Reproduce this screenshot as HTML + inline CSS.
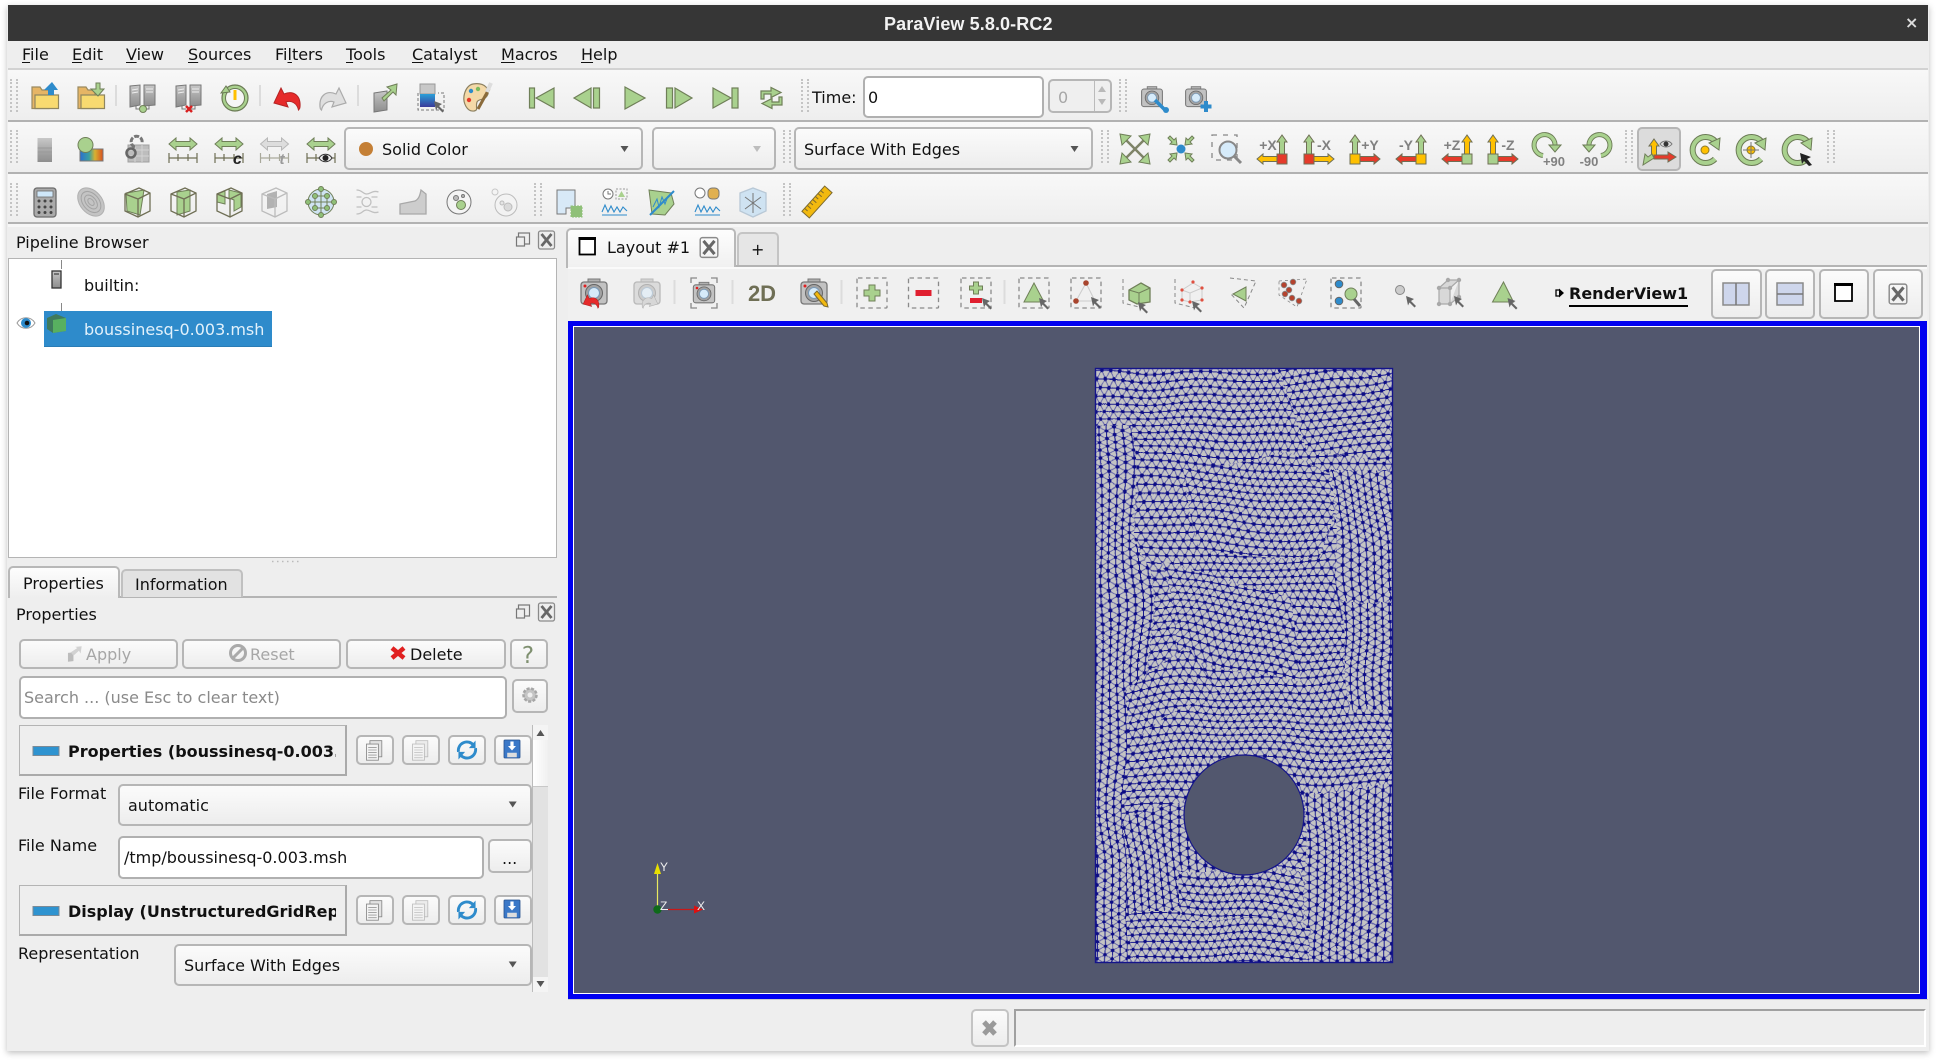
<!DOCTYPE html>
<html><head><meta charset="utf-8"><title>ParaView 5.8.0-RC2</title>
<style>
html,body{margin:0;padding:0;background:#fff;width:1936px;height:1062px;overflow:hidden}
body{position:relative;font-family:"DejaVu Sans",sans-serif;font-size:16px;color:#111}
div{position:absolute;box-sizing:border-box}
.t{position:absolute;white-space:nowrap;line-height:20px;height:20px;margin-top:1px}
.bar{left:8px;width:1920px;background:linear-gradient(#f8f8f8,#eeeeee)}
.ln{left:8px;width:1920px;height:2px;background:#b2b2b2}
.h{border-left:2px dotted #c4c4c4;border-right:2px dotted #c4c4c4;width:8px}
.b{border:2px solid #b6b6b6;border-radius:5px;background:linear-gradient(#fbfbfb,#ededed)}
.in{border:2px solid #b0b0b0;border-radius:5px;background:#fff}
.d{color:#a6a6a6}
.sec{background:#eeeeee;border:1px solid #b4b4b4;border-right:2px solid #aaa;border-bottom:2px solid #aaa}
svg{position:absolute;left:0;top:0}
u{text-underline-offset:2px}
</style></head><body>
<div style="left:7px;top:5px;width:1922px;height:1046px;background:#eeeeee;box-shadow:0 2px 6px rgba(0,0,0,.25)"></div>
<div style="left:8px;top:5px;width:1920px;height:36px;background:#363636"></div>
<div class="t" style="left:884px;top:13px;width:168px;color:#f2f2f2;font-family:'Liberation Sans',sans-serif;font-size:18px;font-weight:bold;letter-spacing:.1px">ParaView 5.8.0-RC2</div>
<div class="t" style="left:1905px;top:12px;color:#ddd;font-size:16px;font-weight:bold">×</div>

<div class="t" style="left:22px;top:44px"><u>F</u>ile</div>
<div class="t" style="left:72px;top:44px"><u>E</u>dit</div>
<div class="t" style="left:126px;top:44px"><u>V</u>iew</div>
<div class="t" style="left:188px;top:44px"><u>S</u>ources</div>
<div class="t" style="left:275px;top:44px">Fi<u>l</u>ters</div>
<div class="t" style="left:346px;top:44px"><u>T</u>ools</div>
<div class="t" style="left:412px;top:44px"><u>C</u>atalyst</div>
<div class="t" style="left:501px;top:44px"><u>M</u>acros</div>
<div class="t" style="left:581px;top:44px"><u>H</u>elp</div>

<div class="ln" style="top:68px;background:#d2d2d2"></div>
<div class="bar" style="top:70px;height:50px"></div>
<div class="ln" style="top:120px"></div>
<div class="bar" style="top:122px;height:50px"></div>
<div class="ln" style="top:172px"></div>
<div class="bar" style="top:174px;height:48px"></div>
<div class="ln" style="top:222px"></div>
<div style="left:8px;top:224px;width:1920px;height:3px;background:#f6f6f6"></div>

<div class="h" style="left:10px;top:79px;height:33px"></div>
<div class="h" style="left:801px;top:79px;height:33px"></div>
<div class="h" style="left:1119px;top:79px;height:33px"></div>
<div class="h" style="left:10px;top:130px;height:33px"></div>
<div class="h" style="left:783px;top:130px;height:33px"></div>
<div class="h" style="left:1101px;top:130px;height:33px"></div>
<div class="h" style="left:1625px;top:130px;height:33px"></div>
<div class="h" style="left:1827px;top:130px;height:33px"></div>
<div class="h" style="left:10px;top:183px;height:33px"></div>
<div class="h" style="left:534px;top:183px;height:33px"></div>
<div class="h" style="left:783px;top:183px;height:33px"></div>

<div class="t" style="left:812px;top:87px">Time:</div>
<div class="in" style="left:863px;top:76px;width:181px;height:42px"></div>
<div class="t" style="left:868px;top:87px">0</div>
<div class="b" style="left:1048px;top:79px;width:64px;height:34px;background:#efefef"></div>
<div style="left:1094px;top:81px;width:1px;height:30px;background:#bbb"></div>
<div class="t d" style="left:1058px;top:87px">0</div>

<div class="b" style="left:344px;top:127px;width:299px;height:43px"></div>
<div class="t" style="left:382px;top:139px">Solid Color</div>
<div class="b" style="left:652px;top:127px;width:124px;height:43px"></div>
<div class="b" style="left:794px;top:127px;width:299px;height:43px"></div>
<div class="t" style="left:804px;top:139px">Surface With Edges</div>
<div class="b" style="left:1637px;top:127px;width:44px;height:44px;background:#dcdcdc"></div>

<!-- pipeline -->
<div class="t" style="left:16px;top:232px">Pipeline Browser</div>
<div style="left:8px;top:258px;width:549px;height:300px;background:#fff;border:1px solid #b4b4b4"></div>
<div style="left:61px;top:260px;width:1px;height:9px;background:#888"></div>
<div style="left:61px;top:303px;width:1px;height:8px;background:#888"></div>
<div class="t" style="left:84px;top:275px">builtin:</div>
<div style="left:44px;top:311px;width:228px;height:36px;background:#2e8bcb;border-bottom:1px solid #2a7cb5"></div>
<div class="t" style="left:84px;top:319px;color:#e2f1fb">boussinesq-0.003.msh</div>

<div style="left:8px;top:596px;width:549px;height:2px;background:#b4b4b4"></div>
<div style="left:121px;top:569px;width:122px;height:28px;background:#e2e2e2;border:2px solid #c0c0c0;border-bottom:0;border-radius:5px 5px 0 0"></div>
<div style="left:8px;top:566px;width:112px;height:32px;background:linear-gradient(#fdfdfd,#eeeeee);border:2px solid #b8b8b8;border-bottom:0;border-radius:5px 5px 0 0"></div>
<div class="t" style="left:23px;top:573px">Properties</div>
<div class="t" style="left:135px;top:574px">Information</div>
<div class="t" style="left:16px;top:604px">Properties</div>

<div class="b" style="left:19px;top:639px;width:159px;height:30px"></div>
<div class="t d" style="left:86px;top:644px">Apply</div>
<div class="b" style="left:182px;top:639px;width:159px;height:30px"></div>
<div class="t d" style="left:250px;top:644px">Reset</div>
<div class="b" style="left:346px;top:639px;width:160px;height:30px"></div>
<div class="t" style="left:410px;top:644px">Delete</div>
<div class="b" style="left:510px;top:639px;width:38px;height:30px"></div>
<div class="in" style="left:19px;top:676px;width:488px;height:43px"></div>
<div class="t" style="left:24px;top:687px;color:#8a8a8a">Search ... (use Esc to clear text)</div>
<div class="b" style="left:512px;top:679px;width:36px;height:34px"></div>

<div class="sec" style="left:19px;top:725px;width:328px;height:51px"></div>
<div class="t" style="left:68px;top:741px;width:268px;overflow:hidden;font-weight:bold">Properties (boussinesq-0.003.msh)</div>
<div class="b" style="left:356px;top:735px;width:38px;height:30px"></div>
<div class="b" style="left:402px;top:735px;width:38px;height:30px"></div>
<div class="b" style="left:448px;top:735px;width:38px;height:30px"></div>
<div class="b" style="left:494px;top:735px;width:38px;height:30px"></div>
<div style="left:533px;top:725px;width:15px;height:267px;background:#e2e2e2"></div>
<div style="left:533px;top:725px;width:15px;height:15px;background:#f4f4f4"></div>
<div style="left:533px;top:740px;width:15px;height:47px;background:linear-gradient(90deg,#fff,#f0f0f0);border-bottom:1px solid #c8c8c8"></div>
<div style="left:533px;top:977px;width:15px;height:15px;background:#f4f4f4"></div>
<div style="left:532px;top:725px;width:1px;height:267px;background:#bbb"></div>

<div class="t" style="left:18px;top:783px">File Format</div>
<div class="b" style="left:118px;top:784px;width:414px;height:42px"></div>
<div class="t" style="left:128px;top:795px">automatic</div>
<div class="t" style="left:18px;top:835px">File Name</div>
<div class="in" style="left:118px;top:836px;width:366px;height:43px"></div>
<div class="t" style="left:124px;top:847px">/tmp/boussinesq-0.003.msh</div>
<div class="b" style="left:488px;top:839px;width:44px;height:34px"></div>
<div class="t" style="left:502px;top:848px">...</div>

<div class="sec" style="left:19px;top:885px;width:328px;height:51px"></div>
<div class="t" style="left:68px;top:901px;width:268px;overflow:hidden;font-weight:bold">Display (UnstructuredGridRepresentation)</div>
<div class="b" style="left:356px;top:895px;width:38px;height:30px"></div>
<div class="b" style="left:402px;top:895px;width:38px;height:30px"></div>
<div class="b" style="left:448px;top:895px;width:38px;height:30px"></div>
<div class="b" style="left:494px;top:895px;width:38px;height:30px"></div>
<div class="t" style="left:18px;top:943px">Representation</div>
<div class="b" style="left:174px;top:944px;width:358px;height:42px"></div>
<div class="t" style="left:184px;top:955px">Surface With Edges</div>

<!-- layout tabs -->
<div style="left:736px;top:265px;width:1191px;height:2px;background:#b4b4b4"></div>
<div style="left:737px;top:232px;width:42px;height:33px;background:#e6e6e6;border:2px solid #c4c4c4;border-bottom:0;border-radius:5px 5px 0 0"></div>
<div style="left:566px;top:228px;width:170px;height:40px;background:linear-gradient(#fdfdfd,#f0f0f0);border:2px solid #b8b8b8;border-bottom:0;border-radius:5px 5px 0 0"></div>
<div class="t" style="left:607px;top:238px;margin-top:0">Layout #1</div>
<div class="t" style="left:751px;top:240px;margin-top:0">+</div>
<div style="left:568px;top:267px;width:1359px;height:2px;background:#fafafa"></div>
<div style="left:568px;top:269px;width:1359px;height:52px;background:#f0f0f0"></div>
<div class="t" style="left:1569px;top:283px;font-weight:bold;border-bottom:0"><span style="display:inline-block;border-bottom:2px solid #000;line-height:18px;height:20px">RenderView1</span></div>
<div class="b" style="left:1711px;top:269px;width:51px;height:50px"></div>
<div class="b" style="left:1765px;top:269px;width:50px;height:50px"></div>
<div class="b" style="left:1819px;top:269px;width:50px;height:50px"></div>
<div class="b" style="left:1873px;top:269px;width:50px;height:50px"></div>

<!-- view -->
<div style="left:568px;top:321px;width:1359px;height:678px;background:#0000f0"></div>
<div style="left:573px;top:326px;width:1347px;height:668px;background:#fff"></div>
<div style="left:574px;top:327px;width:1345px;height:666px;background:#52576e"></div>

<!-- status -->
<div style="left:568px;top:999px;width:1360px;height:1px;background:#ccc"></div>
<div class="b" style="left:971px;top:1009px;width:38px;height:38px;border-color:#c4c4c4"></div>
<div style="left:1014px;top:1009px;width:912px;height:38px;background:#eeeeee;border-top:2px solid #a0a0a0;border-left:2px solid #a0a0a0;border-right:2px solid #fff;border-bottom:2px solid #fff"></div>

<svg width="1936" height="1062" viewBox="0 0 1936 1062" xmlns="http://www.w3.org/2000/svg">
<defs>
<linearGradient id="gb" x1="0" y1="0" x2="0" y2="1"><stop offset="0" stop-color="#c8c8c8"/><stop offset=".5" stop-color="#a8a8a8"/><stop offset="1" stop-color="#8e8e8e"/></linearGradient>
<linearGradient id="rb" x1="0" y1="0" x2="1" y2="0"><stop offset="0" stop-color="#2a6fd0"/><stop offset=".4" stop-color="#3aa0a0"/><stop offset=".65" stop-color="#d8b030"/><stop offset="1" stop-color="#d85020"/></linearGradient>
<linearGradient id="cm" x1="0" y1="0" x2="0" y2="1"><stop offset="0" stop-color="#2a9fd8"/><stop offset="1" stop-color="#3a3a9a"/></linearGradient>

<pattern id="m0" width="8.8" height="15.2" patternUnits="userSpaceOnUse">
<rect width="8.8" height="15.2" fill="#c4c4c4"/>
<path d="M0 0L4.4 7.6L8.8 0M0 15.2L4.4 7.6L8.8 15.2" stroke="#5c5ca8" stroke-width=".9" fill="none"/>
<path d="M0 7.6H8.8M0 0H8.8M0 15.2H8.8" stroke="#18188e" stroke-width="1.1" fill="none"/>
<g fill="#0c0c84"><circle cx="0" cy="0" r="1.8"/><circle cx="8.8" cy="0" r="1.8"/><circle cx="0" cy="15.2" r="1.8"/><circle cx="8.8" cy="15.2" r="1.8"/><circle cx="4.4" cy="7.6" r="1.8"/></g>
</pattern>
<pattern id="m90" href="#m0" patternTransform="rotate(90)"/>
<pattern id="ma" href="#m0" patternTransform="rotate(5)"/>
<pattern id="mb" href="#m0" patternTransform="rotate(-6)"/>
<pattern id="mc" href="#m0" patternTransform="rotate(84)"/>
<pattern id="md" href="#m0" patternTransform="rotate(10)"/>
<filter id="wp" filterUnits="userSpaceOnUse" x="1050" y="320" width="390" height="690" color-interpolation-filters="sRGB"><feTurbulence type="fractalNoise" baseFrequency=".014" numOctaves="1" seed="7" result="n"/><feDisplacementMap in="SourceGraphic" in2="n" scale="16" xChannelSelector="R" yChannelSelector="G"/></filter>
<clipPath id="mclip"><rect x="1095" y="368" width="298" height="595"/></clipPath>

<g id="fo"><path d="M-13 11.5V-10h8l2 3h7v18.5z" fill="#e6b565" stroke="#9a8a60" stroke-width="1.2"/><path d="M-10 11.5V-2h23.5v13.5z" fill="#f8da70" stroke="#8f8660" stroke-width="1.2"/></g>
<g id="sb"><path d="M-13-13l10-1v20l-10 2z" fill="url(#gb)" stroke="#777"/><path d="M1-14h11v20l-11 1z" fill="url(#gb)" stroke="#777"/><path d="M-11-9l6-1M-11-6l6-1M3-10h7M3-7h7" stroke="#eee"/></g>
<g id="srv"><use href="#sb"/><path d="M-7 7v3h4M6 7v3h-4" fill="none" stroke="#777"/></g>
<g id="cam"><path d="M-6-13h12v4h-12z" fill="#b0b0b0" stroke="#777"/><rect x="-13" y="-10" width="26" height="22" rx="3" fill="#c2c2c2" stroke="#777" stroke-width="1.3"/><circle cy="1" r="8.5" fill="#a2a2a2" stroke="#666"/><circle cy="1" r="5.5" fill="#d6ebfa" stroke="#7a9ab8"/></g>
<path id="ua" d="M0-15L5-8H2.5V4H-2.5V-8H-5Z" stroke="#6f6f55"/>
<path id="ra" d="M-5 6.5H9V4L15 9L9 14V11.5H-5Z" stroke="#6f6f55"/>
<rect id="sq" x="-15" y="4" width="10" height="10" stroke="#6f6f55"/>
<path id="cur" d="M0 0L8 3L5 5L10 10L8.5 11.5L3.5 6.5L2 9.5Z" fill="#666"/>
<rect id="ds" x="-15" y="-15" width="30" height="30" rx="1" fill="none" stroke="#8a8a8a" stroke-width="1.3" stroke-dasharray="4.5 3.5"/>
<path id="ra2" d="M-14-5L-7-11V-7.5H7V-11L14-5L7 1V-2.5H-7V1Z" fill="#a9d18e" stroke="#6f7f58"/>
<g id="rl" fill="none" stroke="#6f6f55" stroke-width="1.2"><path d="M-14 9H14M-14 4V14M-5 5V12M5 5V12M14 4V14"/></g>
<g id="cb" fill="none" stroke="#6f6f55" stroke-width="1.3"><path d="M-12-8L2-14L13-9V9L1 15L-12 9Z"/><path d="M-12-8L1-3V15M1-3L13-9"/></g>
<path id="ta" d="M-4-3H4L0 3Z" fill="#555"/>
<g id="cp" transform="scale(.85)"><rect x="-6" y="-11" width="14" height="19" fill="#e2e2e2" stroke="#888"/><rect x="-10" y="-7" width="14" height="19" fill="#f4f4f4" stroke="#888"/><path d="M-8-3h10M-8 0h10M-8 3h10M-8 6h10M-8 9h10" stroke="#999"/></g>
<g id="rf" transform="scale(.95)"><path d="M-9 2A9 9 0 0 1 7-5" fill="none" stroke="#2e8bcb" stroke-width="3"/><path d="M9 -2A9 9 0 0 1-7 5" fill="none" stroke="#2e8bcb" stroke-width="3"/><path d="M9-10V-2H2Z M-9 10V2H-2Z" fill="#2e8bcb"/></g>
<g id="sv" transform="scale(.8 .75)"><rect x="-10" y="-12" width="20" height="24" rx="1" fill="#3a78c8" stroke="#27508c"/><rect x="-6" y="5" width="12" height="6" fill="#ddd"/><path d="M-2-10H2V-4H5L0 2L-5-4H-2Z" fill="#fff"/></g>
<g id="xx"><rect x="-8" y="-9" width="16" height="18" rx="2" fill="none" stroke="#8a8a8a" stroke-width="1.3"/><path d="M-5-6L5 6M5-6L-5 6" stroke="#686868" stroke-width="2.8"/></g>
<g id="fl"><rect x="-5" y="-7" width="11" height="11" fill="none" stroke="#777" stroke-width="1.2"/><rect x="-7" y="-3" width="8" height="9" fill="#eee" stroke="#777" stroke-width="1.2"/></g>
<g id="ringb" fill="none"><path d="M10 9A13 13 0 1 1 10-9" stroke="#6b7b55" stroke-width="6"/><path d="M10 9A13 13 0 1 1 10-9" stroke="#a9d18e" stroke-width="4"/><path d="M4-7L15-12L14 0Z" fill="#a9d18e" stroke="#6b7b55"/></g>
<g id="inw"><path d="M-4-4L-11-5L-9-7L-13-11L-11-13L-7-9L-5-11Z"/></g>
</defs>

<!-- mesh -->
<g clip-path="url(#mclip)"><g filter="url(#wp)">
<rect x="1050" y="320" width="390" height="690" fill="url(#m0)"/>
<polygon points="1180,470 1290,450 1340,480 1320,560 1200,550" fill="url(#ma)"/>
<polygon points="1260,330 1440,330 1440,470 1310,450" fill="url(#mb)"/>
<polygon points="1160,560 1290,600 1300,680 1180,660" fill="url(#md)"/>
<polygon points="1050,425 1132,425 1138,540 1150,570 1150,680 1125,720 1125,1010 1050,1010" fill="url(#m90)"/>
<polygon points="1330,470 1440,470 1440,620 1340,620" fill="url(#mc)"/>
<polygon points="1340,600 1440,600 1440,710 1350,710" fill="url(#m90)"/>
<polygon points="1125,690 1190,650 1220,690 1130,740" fill="url(#mb)"/>
<polygon points="1125,820 1190,800 1215,880 1180,910 1125,910" fill="url(#mc)"/>
<polygon points="1180,870 1300,870 1310,920 1180,920" fill="url(#ma)"/>
<polygon points="1305,790 1440,770 1440,1010 1300,1010" fill="url(#m90)"/>
<polygon points="1300,740 1440,720 1440,785 1306,790" fill="url(#m0)"/>
<polygon points="1150,925 1310,925 1310,1010 1150,1010" fill="url(#m0)"/>
</g></g>
<rect x="1095.5" y="368.5" width="297" height="594" fill="none" stroke="#14148a" stroke-width="1.4"/>
<circle cx="1244" cy="815" r="60" fill="#52576e" stroke="#14148a" stroke-width="1.2"/>

<!-- axes -->
<path d="M657.5 909V874" stroke="#e8e860" stroke-width="1.2"/>
<path d="M657.5 863L654 874H661Z" fill="#e8e000"/>
<path d="M668 909.500H696" stroke="#c81818" stroke-width="1.2"/>
<path d="M703 909.500L694 905.500V913.500Z" fill="#dd1010"/>
<path d="M661 909.500H668" stroke="#eee" stroke-width="1"/>
<circle cx="657.500" cy="909.500" r="4.200" fill="#0e6a1a"/>
<text x="660" y="871" font-family="Liberation Sans,sans-serif" font-size="12" fill="#eee">Y</text>
<text x="660" y="910" font-family="Liberation Sans,sans-serif" font-size="12" fill="#eee">Z</text>
<text x="697" y="910" font-family="Liberation Sans,sans-serif" font-size="12" fill="#eee">X</text>

<!-- toolbar 1 -->
<g transform="translate(45 97)"><use href="#fo"/><path d="M3-2V-7H-1L7-15L13-7H9V-2Z" fill="#2e8bcb"/></g>
<g transform="translate(91 97)"><use href="#fo"/><path d="M5-14V-8H0L7-1L13-8H9V-14Z" fill="#a9d18e" stroke="#6f7f58"/></g>
<path d="M116 85V106M260 85V106M358 85V106" stroke="#dcdcdc" stroke-width="2"/>
<g transform="translate(143 99)"><use href="#srv"/><circle cy="10" r="3.5" fill="#a9d18e" stroke="#6f7f58"/></g>
<g transform="translate(189 99)"><use href="#srv"/><path d="M-3 7L3 13M3 7L-3 13" stroke="#d82020" stroke-width="2.5"/></g>
<g transform="translate(235 98)"><circle r="13" fill="#a9d18e" stroke="#6b7b55" stroke-width="1.2"/><circle r="9.5" fill="#f6f6f6" stroke="#6b7b55"/><path d="M0-8V2" stroke="#ffc000" stroke-width="3"/><path d="M-14-5L-9-12L-5-6Z" fill="#a9d18e" stroke="#6b7b55"/></g>
<path transform="translate(287 98)" d="M-13 5L-6-10L-3-4C6-8 14-3 13 9C13 11 12 11.5 11.5 12C10 5 4 2-1 4L1 9Z" fill="#e62a2a" stroke="#b42424"/>
<path transform="translate(333 98) scale(-1 1)" d="M-13 5L-6-10L-3-4C6-8 14-3 13 9C13 11 12 11.5 11.5 12C10 5 4 2-1 4L1 9Z" fill="#dfdfdf" stroke="#ababab" stroke-width="1.2"/>
<g transform="translate(384 98)"><path d="M-10-5L3-7V12L-10 14Z" fill="url(#gb)" stroke="#777"/><path d="M-2 0L7-8L3-11L13-14L12-3L9-6L0 3Z" fill="#a9d18e" stroke="#6f7f58"/></g>
<g transform="translate(431 98)"><rect x="-11" y="-14" width="15" height="10" fill="#c8c8c8" stroke="#999"/><rect x="-11" y="-4" width="15" height="13" fill="url(#cm)"/><path d="M-13-5V12H13V-5H7" fill="none" stroke="#777" stroke-dasharray="3 2"/><use href="#cur" x="3" y="3"/></g>
<g transform="translate(477 98)"><path d="M-4-14C8-16 14-8 10-2C7 3 2 0 0 4C-2 9 2 12-3 13C-10 14-14 5-13-2C-12-8-9-13-4-14Z" fill="#f4d9a8" stroke="#8c8060" stroke-width="1.2"/><circle cx="-6" cy="-7" r="2.2" fill="#2e8bcb"/><circle cx="1" cy="-9" r="2.2" fill="#7cba5c"/><circle cx="-8" cy="2" r="2.2" fill="#e53a2a"/><path d="M1 11L12-9" stroke="#8a6a3a" stroke-width="3"/><path d="M10-6L14-15" stroke="#ddd" stroke-width="4"/></g>
<g fill="#a9d18e" stroke="#6f7f58" stroke-width="1.2">
<rect x="529.500" y="88" width="5" height="20"/><path d="M554 88L536 98L554 108Z"/>
<rect x="593.500" y="88" width="6" height="20"/><path d="M591 88L574 98L591 108Z"/>
<path d="M625 87L645 98L625 109Z"/>
<rect x="666.500" y="88" width="6" height="20"/><path d="M675 88L692 98L675 108Z"/>
<rect x="732" y="88" width="6" height="20"/><path d="M713 88L731 98L713 108Z"/>
<path d="M761 99V91H771V87.500L781 92.500L771 97.500V94H764V99Z"/><path d="M782 97V105H772V108.500L762 103.500L772 98.500V102H779V97Z"/>
</g>
<use href="#ta" transform="translate(1102 89) rotate(180)" opacity=".35"/><use href="#ta" transform="translate(1102 102)" opacity=".35"/>
<g transform="translate(1152 97) scale(.8)"><use href="#cam"/></g><path d="M1155 100L1165 110" stroke="#2e8bcb" stroke-width="3.500"/><circle cx="1166" cy="110" r="3" fill="#2e8bcb"/>
<g transform="translate(1196 97) scale(.8)"><use href="#cam"/></g><path d="M1206 101V112M1200.500 106.500H1211.500" stroke="#2e8bcb" stroke-width="4"/>

<!-- toolbar 2 -->
<rect x="37.500" y="138" width="14.500" height="24" fill="url(#gb)"/>
<path d="M37.500 148h14.500M37.500 152h14.500M37.500 156h14.500" stroke="#999"/>
<rect x="80" y="149" width="23" height="12" fill="url(#rb)" stroke="#777"/><circle cx="85.500" cy="145" r="7.500" fill="#a9d18e" stroke="#6f7f58"/>
<g transform="translate(137 149)"><rect x="-9" y="-4" width="21" height="17" fill="#bdbdbd" stroke="#a0a0a0"/><path d="M-9 1H12M-9 7H12M-2-4V13M5-4V13" stroke="#d4d4d4"/><path d="M-2-2A5.500 5.500 0 1 1 5-6" fill="none" stroke="#777" stroke-width="3" stroke-dasharray="5 1.500"/><circle cx="-6" cy="4" r="4.500" fill="none" stroke="#666" stroke-width="2.500"/></g>
<g transform="translate(183 149)"><use href="#ra2"/><use href="#rl"/></g>
<g transform="translate(229 149)"><use href="#ra2"/><use href="#rl"/><text x="4" y="15" font-family="Liberation Sans,sans-serif" font-size="16" font-weight="bold" font-style="italic" fill="#222">c</text></g>
<g transform="translate(274.500 149)" opacity=".55"><path d="M-14-5L-7-11V-7.500H7V-11L14-5L7 1V-2.500H-7V1Z" fill="#ccc" stroke="#888"/><use href="#rl"/><text x="5" y="15" font-family="Liberation Sans,sans-serif" font-size="15" font-weight="bold" font-style="italic" fill="#555">t</text></g>
<g transform="translate(321 149)"><use href="#ra2"/><use href="#rl"/><path d="M-2 9C1 4 8 4 11 9C8 14 1 14-2 9Z" fill="#eee" stroke="#333"/><circle cx="4.500" cy="9" r="3" fill="#222"/></g>
<circle cx="366" cy="149" r="7" fill="#c47f35"/>
<use href="#ta" transform="translate(624.500 149)"/><use href="#ta" transform="translate(757 149)" opacity=".35"/><use href="#ta" transform="translate(1074.500 149)"/>
<use href="#ta" transform="translate(512.700 804.500)"/><use href="#ta" transform="translate(512.700 964.500)"/>
<!-- reset camera icons -->
<g transform="translate(1135 149)" fill="#a9d18e" stroke="#6f7f58"><path d="M-11-11L11 11M11-11L-11 11" stroke="#7f8468" stroke-width="2.500"/><path d="M-15-15L-13-4L-4-13Z M15-15L13-4L4-13Z M-15 15L-13 4L-4 13Z M15 15L13 4L4 13Z"/></g>
<g transform="translate(1181 149)" fill="#a9d18e" stroke="#6f7f58"><use href="#inw"/><use href="#inw" transform="rotate(90)"/><use href="#inw" transform="rotate(180)"/><use href="#inw" transform="rotate(270)"/><circle r="4.500" fill="#2e8bcb" stroke="none"/></g>
<g transform="translate(1227 149)"><rect x="-15" y="-14" width="25" height="25" fill="none" stroke="#888" stroke-width="1.300" stroke-dasharray="5 6"/><circle cx="1" cy="1" r="8.500" fill="#d6ebfa" stroke="#888" stroke-width="2"/><path d="M7 7L14 14" stroke="#888" stroke-width="3"/></g>
<g>
<g transform="translate(1272 150) scale(-1 1)"><use href="#sq" fill="#e53a2a"/><use href="#ua" x="-10" fill="#a9d18e"/><use href="#ra" fill="#ffc000"/></g>
<g transform="translate(1319 150)"><use href="#sq" fill="#e53a2a"/><use href="#ua" x="-10" fill="#a9d18e"/><use href="#ra" fill="#ffc000"/></g>
<g transform="translate(1365 150)"><use href="#sq" fill="#ffc000"/><use href="#ua" x="-10" fill="#a9d18e"/><use href="#ra" fill="#e53a2a"/></g>
<g transform="translate(1411 150) scale(-1 1)"><use href="#sq" fill="#ffc000"/><use href="#ua" x="-10" fill="#a9d18e"/><use href="#ra" fill="#e53a2a"/></g>
<g transform="translate(1457 150) scale(-1 1)"><use href="#sq" fill="#a9d18e"/><use href="#ua" x="-10" fill="#ffc000"/><use href="#ra" fill="#e53a2a"/></g>
<g transform="translate(1503 150)"><use href="#sq" fill="#a9d18e"/><use href="#ua" x="-10" fill="#ffc000"/><use href="#ra" fill="#e53a2a"/></g>
</g>
<g font-family="Liberation Sans,sans-serif" font-size="14" font-weight="bold" fill="#808080" text-anchor="middle">
<text x="1268" y="150">+X</text><text x="1324" y="150">-X</text><text x="1370" y="150">+Y</text><text x="1406" y="150">-Y</text><text x="1452" y="150">+Z</text><text x="1508" y="150">-Z</text>
<text x="1554" y="166" font-size="13">+90</text><text x="1589" y="166" font-size="13">-90</text>
</g>
<g fill="none"><path d="M1543 155.500A10.500 10.500 0 1 1 1555 146" stroke="#6b7b55" stroke-width="5"/><path d="M1543 155.500A10.500 10.500 0 1 1 1555 146" stroke="#a9d18e" stroke-width="3.200"/></g>
<path d="M1549 145L1555 152L1561 145Z" fill="#a9d18e" stroke="#6b7b55"/>
<g fill="none"><path d="M1601 155.500A10.500 10.500 0 1 0 1589 146" stroke="#6b7b55" stroke-width="5"/><path d="M1601 155.500A10.500 10.500 0 1 0 1589 146" stroke="#a9d18e" stroke-width="3.200"/></g>
<path d="M1583 145L1589 152L1595 145Z" fill="#a9d18e" stroke="#6b7b55"/>
<!-- axes centred -->
<g transform="translate(1659 150)"><use href="#ua" fill="#ffc000" transform="translate(-5 4)"/><path d="M-3 6H11V3L19 8L11 13V10H-3Z" transform="translate(-2 -1)" fill="#e53a2a" stroke="#6f6f55"/><path d="M-5 8L-16 15L-14 4L-11 7L-7 4Z" fill="#a9d18e" stroke="#6f7f58"/><path d="M1-6C4-10 10-10 13-6C10-2 4-2 1-6Z" fill="#ddd" stroke="#777"/><circle cx="7" cy="-6" r="2.500" fill="#333"/></g>
<g transform="translate(1705 150)"><use href="#ringb"/><circle r="4" fill="#ffc000" stroke="#8a7a30"/></g>
<g transform="translate(1751 150)"><use href="#ringb"/><circle r="4" fill="#ffc000" stroke="#8a7a30"/><path d="M0-8V8M-8 0H8" stroke="#777"/></g>
<g transform="translate(1797 150)"><use href="#ringb"/><path d="M3 3L14 7L10 9L15 15L12 16L7 11L5 14Z" fill="#222"/></g>

<!-- toolbar 3 -->
<g transform="translate(45 202)"><rect x="-11" y="-14" width="22" height="29" rx="3" fill="#aaa" stroke="#6c6c6c" stroke-width="1.3"/><rect x="-8" y="-11" width="16" height="6" fill="#cfe7f9" stroke="#6c6c6c" stroke-width=".8"/><g fill="#444"><circle cx="-6" cy="-1" r="1.500"/><circle cx="0" cy="-1" r="1.500"/><circle cx="6" cy="-1" r="1.500"/><circle cx="-6" cy="5" r="1.500"/><circle cx="0" cy="5" r="1.500"/><circle cx="6" cy="5" r="1.500"/><circle cx="-6" cy="10.500" r="1.500"/><circle cx="0" cy="10.500" r="1.500"/><circle cx="6" cy="10.500" r="1.500"/></g></g>
<g transform="translate(91 202) rotate(50)" fill="none"><ellipse rx="16" ry="11" fill="#c4c4c4" stroke="#b0b0b0"/><ellipse rx="12" ry="8" stroke="#a4a4a4"/><ellipse rx="8" ry="5" stroke="#a4a4a4"/><ellipse rx="4" ry="2.500" stroke="#a4a4a4"/></g>
<g transform="translate(137 202)"><path d="M-11-9L7-12L3 13L-10 9Z" fill="#a9d18e" stroke="#6f7f58"/><use href="#cb"/></g>
<g transform="translate(183 202)"><path d="M-6-10L7-12V9L-6 13Z" fill="#a9d18e" stroke="#6f7f58"/><use href="#cb"/></g>
<g transform="translate(229 202)"><path d="M-12-8L-4-11V2L-12 0Z M0-12L12-9V5L5 9V-2L0-4Z" fill="#a9d18e" stroke="#6f7f58"/><use href="#cb"/></g>
<g transform="translate(274 202)" opacity=".6"><path d="M-7-8L3-11V5L-7 7Z" fill="#888"/><path d="M-12-8L2-14L13-9V9L1 15L-12 9Z M-12-8L1-3V15M1-3L13-9" fill="none" stroke="#999" stroke-width="1.300"/></g>
<g transform="translate(321 202)"><circle r="13" fill="#cfe3f2" stroke="#6f7f58"/><path d="M-6-6H6V6H-6ZM-13 0H13M0-13V13" fill="none" stroke="#6f7f58"/><g fill="#8fc078" stroke="#6f7f58"><circle cy="-13" r="2.500"/><circle cy="13" r="2.500"/><circle cx="13" r="2.500"/><circle cx="-13" r="2.500"/><circle cx="-6" cy="-6" r="2.500"/><circle cx="6" cy="-6" r="2.500"/><circle cx="-6" cy="6" r="2.500"/><circle cx="6" cy="6" r="2.500"/></g></g>
<g transform="translate(366.500 202)" fill="none" stroke="#c0c0c0" stroke-width="1.300"><path d="M-10-12C-4-12-4-8 0-8S6-12 12-10M-10 12C-4 12-4 8 0 8S6 12 12 10M-10-5H-5M5-5H11M-10 5H-5M5 5H11"/><circle r="4.500"/></g>
<g transform="translate(413 202)"><path d="M-13 12V2L2-1C6-3 7-7 8-12L13-8V12Z" fill="#cdcdcd" stroke="#a8a8a8" stroke-width="1.300"/></g>
<g transform="translate(459 202)"><circle r="12" fill="#f4f4f4" stroke="#777"/><circle cx="2" cy="3" r="4.500" fill="#a9d18e" stroke="#6f7f58"/><circle cx="-3" cy="-4" r="2.500" fill="#bbb" stroke="#777"/><circle cx="4" cy="-6" r="1.500" fill="#bbb" stroke="#777"/></g>
<g transform="translate(505 202)" opacity=".6"><circle r="11" cx="1" cy="3" fill="#f4f4f4" stroke="#999"/><circle cx="3" cy="5" r="4" fill="#ccc" stroke="#999"/><circle cx="-3" cy="1" r="2" fill="#ddd" stroke="#999"/><circle cx="-10" cy="-10" r="3" fill="none" stroke="#aaa"/></g>
<g transform="translate(569 202)"><path d="M-12-12H6V6H-3V12H-12Z" fill="#d8e9f7" stroke="#777"/><rect x="2" y="4" width="11" height="11" fill="#8fc078" stroke="#8fc078" stroke-dasharray="2 1"/></g>
<g transform="translate(614 202)"><circle cx="-6" cy="-8" r="5" fill="#fff" stroke="#777"/><path d="M-6-11V-8H-3" stroke="#777" fill="none"/><path d="M2-13H13V-3H2Z" fill="none" stroke="#999" stroke-dasharray="2 1.500"/><path d="M7.500-11L11-5H4Z" fill="#a9d18e"/><path d="M-12 10L-9 3L-6 10L-3 4L0 10L3 5L6 10L9 5L13 9M-12 13H13" fill="none" stroke="#2e8bcb" stroke-width="1.100"/></g>
<g transform="translate(661 202)"><path d="M-12-12L10-9L13 2L4 13L-9 12Z" fill="#a9d18e" stroke="#6f7f58"/><path d="M-11 13L13-11" stroke="#2e8bcb" stroke-width="2"/><path d="M-8 5L-4-3L-2 5L1-5L4 2L7-6" fill="none" stroke="#2e8bcb"/></g>
<g transform="translate(707 202)"><circle cx="-7" cy="-9" r="5" fill="#fff" stroke="#777"/><rect x="1" y="-14" width="11" height="11" rx="4" fill="#e0b050" stroke="#777"/><path d="M-12 10L-9 3L-6 10L-3 4L0 10L3 5L6 10L9 5L13 9M-12 13H13" fill="none" stroke="#2e8bcb" stroke-width="1.100"/></g>
<g transform="translate(753 202)"><path d="M-13-9L0-14L13-9V9L0 15L-13 9Z" fill="#cfe3f2" stroke="#b8c8d6" stroke-width="1.300"/><path d="M0-9V11M-8-5L8 7M8-5L-8 7" stroke="#777"/></g>
<g transform="translate(817 202) rotate(-48)"><rect x="-17" y="-5" width="34" height="10" fill="#f2b90f" stroke="#7c6a30"/><path d="M-13-5V-1M-9-5V0M-5-5V-1M-1-5V0M3-5V-1M7-5V0M11-5V-1" stroke="#7c6a30"/></g>

<!-- pipeline icons -->
<g transform="translate(523.500 240)"><use href="#fl"/></g><g transform="translate(546.500 240)"><use href="#xx"/></g>
<g transform="translate(523.500 612)"><use href="#fl"/></g><g transform="translate(546.500 612)"><use href="#xx"/></g>
<rect x="52" y="271" width="9" height="17" fill="url(#gb)" stroke="#333" stroke-width="1.300"/><path d="M54 274H59" stroke="#222"/>
<path d="M17 323C21 316 31 316 35 323C31 330 21 330 17 323Z" fill="#fff" stroke="#999"/><circle cx="26" cy="323" r="5" fill="#2e8bcb"/><circle cx="27" cy="323" r="2.300" fill="#111"/>
<path d="M47 318L56 314L66 318V331L53 333L47 329Z" fill="#3f7a5c"/><path d="M53 320L66 318V331L53 333Z" fill="#58b060"/>
<path d="M272 561.500H300" stroke="#bbb" stroke-width="1.500" stroke-dasharray="1.500 3.500"/>
<!-- props -->
<g transform="translate(74 654) scale(.55)" opacity=".6"><path d="M-11-2L-1-3V13L-11 14Z" fill="#999"/><path d="M-6-3L6-11L2-13L14-14L12-1L9-6L-1 3Z" fill="#bbb"/></g>
<circle cx="238" cy="653" r="7.500" fill="none" stroke="#aaa" stroke-width="3"/><path d="M233 658L243 648" stroke="#aaa" stroke-width="3"/>
<path d="M392 648L398 653L404 648M392 658L398 653L404 658" stroke="#e02020" stroke-width="4.500" fill="none"/>
<text x="528" y="663" font-family="DejaVu Sans,sans-serif" font-size="23" fill="#7f9070" text-anchor="middle">?</text>
<circle cx="530" cy="695" r="6.500" fill="#c4c4c4" stroke="#a6a6a6" stroke-width="2.500" stroke-dasharray="3 1.500"/><circle cx="530" cy="695" r="2.500" fill="#eee"/>
<rect x="33" y="746.500" width="26" height="9" fill="#2e93d0" stroke="#7b8a96"/>
<rect x="33" y="906.500" width="26" height="9" fill="#2e93d0" stroke="#7b8a96"/>
<g transform="translate(375 750)"><use href="#cp"/></g><g transform="translate(421 750)" opacity=".5"><use href="#cp"/></g><use href="#rf" transform="translate(467 750)"/><use href="#sv" transform="translate(512 749)"/>
<g transform="translate(375 910)"><use href="#cp"/></g><g transform="translate(421 910)" opacity=".5"><use href="#cp"/></g><use href="#rf" transform="translate(467 910)"/><use href="#sv" transform="translate(512 909)"/>
<use href="#ta" transform="translate(540.500 733) rotate(180)"/><use href="#ta" transform="translate(540.500 984)"/>

<!-- layout tab icons -->
<rect x="579.500" y="238" width="15.500" height="16.500" fill="#fff" stroke="#000" stroke-width="1.800"/><path d="M578.500 238.500H596" stroke="#000" stroke-width="3"/>
<use href="#xx" transform="translate(709 247.500) scale(1.100)"/>
<!-- view toolbar -->
<g transform="translate(594 292)"><use href="#cam"/><circle cx="-9" cy="-6" r="1.500" fill="#e02020"/><path transform="translate(-3 9) scale(.6)" d="M-13 5L-6-10L-3-4C6-8 14-3 13 9C13 11 12 11.500 11.500 12C10 5 4 2-1 4L1 9Z" fill="#e62a2a" stroke="#b42424"/></g>
<g transform="translate(647 292)" opacity=".45"><use href="#cam"/><path transform="translate(3 9) scale(-.6 .6)" d="M-13 5L-6-10L-3-4C6-8 14-3 13 9C13 11 12 11.500 11.500 12C10 5 4 2-1 4L1 9Z" fill="#bbb" stroke="#666"/></g>
<path d="M674.500 280V304M732.500 280V304M841.500 280V304M1004.500 280V304" stroke="#dcdcdc" stroke-width="2"/>
<g transform="translate(704 293)"><use href="#cam" transform="scale(.82)"/><circle cx="-7" cy="-5" r="1.300" fill="#e02020"/><path d="M-13-10V-15H-7M7-15H13V-10M-13 10V15H-7M7 15H13V10" fill="none" stroke="#888" stroke-width="1.300"/></g>
<text x="762" y="301" font-family="Liberation Sans,sans-serif" font-size="22" font-weight="bold" fill="#6f6f55" text-anchor="middle">2D</text>
<g transform="translate(814 292)"><use href="#cam"/><circle cx="-9" cy="-6" r="1.500" fill="#e02020"/><path d="M0 2L3-1L13 11L14 15L10 14Z" fill="#f2b90f" stroke="#7c6a30"/></g>
<g transform="translate(872 293)"><use href="#ds"/><path d="M-3-8H3V-3H8V3H3V8H-3V3H-8V-3H-3Z" fill="#a9d18e" stroke="#6f7f58"/></g>
<g transform="translate(923.500 293)"><use href="#ds"/><rect x="-8" y="-3" width="16" height="6" fill="#e01f2f"/></g>
<g transform="translate(976 293)"><use href="#ds"/><path d="M-2.500-11H2.500V-7H6.500V-3H2.500V1H-2.500V-3H-6.500V-7H-2.500Z" fill="#a9d18e" stroke="#6f7f58"/><rect x="-6" y="5" width="12" height="5" fill="#e01f2f"/><use href="#cur" x="6" y="5"/></g>
<g transform="translate(1034 293)"><use href="#ds"/><path d="M0-10L10 9H-10Z" fill="#a9d18e" stroke="#6f7f58"/><use href="#cur" x="5" y="5"/></g>
<g transform="translate(1086 293)"><use href="#ds"/><path d="M0-10L9 8H-10Z" fill="none" stroke="#ccc"/><circle cy="-10" r="2.800" fill="#a8452e"/><circle cx="-10" cy="8" r="2.800" fill="#a8452e"/><use href="#cur" x="5" y="4"/></g>
<g transform="translate(1138 293)"><path d="M-15-14L-15 10L5 15" fill="none" stroke="#888" stroke-dasharray="4 3"/><path d="M-9-3L3-10L12-5V9L-1 11L-9 7Z" fill="#a9d18e" stroke="#6f7f58" stroke-width="1.300"/><path d="M-9-3L1 0V11M1 0L12-5" fill="none" stroke="#6f7f58"/><use href="#cur" x="0" y="9"/></g>
<g transform="translate(1190 293)"><path d="M-15-14L-15 10L5 15" fill="none" stroke="#888" stroke-dasharray="4 3"/><path d="M-8-3L3-10L12-5V7L0 9L-8 7Z M-8-3L0 0V9M0 0L12-5" fill="none" stroke="#ccc"/><g fill="#e05040"><circle cx="-8" cy="-3" r="1.600"/><circle cx="3" cy="-11" r="1.600"/><circle cx="12" cy="-5" r="1.600"/><circle cx="12" cy="7" r="1.600"/><circle cx="0" cy="9" r="1.600"/><circle cx="-8" cy="7" r="1.600"/></g><use href="#cur" x="2" y="8"/></g>
<g transform="translate(1242 293)"><path d="M-12-15L14-12L2 15L-12 0" fill="none" stroke="#888" stroke-dasharray="4 3"/><path d="M4-6V8L-9 1Z" fill="#a9d18e" stroke="#6f7f58"/></g>
<g transform="translate(1293 293)" fill="#b5432e" stroke="#888" stroke-width=".8"><path d="M-14-12L14-14L4 14L-14 2Z" fill="none" stroke-dasharray="3 3"/><circle cx="-9" cy="-8" r="2.800"/><circle cx="0" cy="-11" r="2.800"/><circle cx="-4" cy="-3" r="2.800"/><circle cx="-8" cy="1" r="2.800"/><circle cx="-1" cy="5" r="2.800"/><circle cx="6" cy="8" r="2.800"/></g>
<g transform="translate(1346 293)"><use href="#ds"/><circle cx="-7" cy="-9" r="3.800" fill="#2e8bcb" stroke="#666"/><circle cx="-7" cy="8" r="3.800" fill="#2e8bcb" stroke="#666"/><circle cx="5" cy="1" r="6" fill="#a9d18e" stroke="#6f7f58"/><path d="M8 6L14 13" stroke="#666" stroke-width="3"/></g>
<g transform="translate(1402 293)"><circle cx="-2" cy="-3" r="4.500" fill="#ccc" stroke="#888"/><use href="#cur" x="4" y="3"/></g>
<g transform="translate(1451 293)"><path d="M-12-5L-1-5L-1 11H-12Z M-12-5L-3-13H8L-1-5M8-13V4L-1 11" fill="#d8d8d8" stroke="#a8a8a8" stroke-width="1.200"/><g fill="#a8a8a8"><circle cx="-12" cy="-5" r="2.200"/><circle cx="-1" cy="-5" r="2.200"/><circle cx="-12" cy="11" r="2.200"/><circle cx="-1" cy="11" r="2.200"/><circle cx="-3" cy="-13" r="2.200"/><circle cx="8" cy="-13" r="2.200"/><circle cx="8" cy="4" r="2.200"/></g><use href="#cur" x="3" y="3"/></g>
<g transform="translate(1503.500 293)"><path d="M0-11L10 9H-11Z" fill="#a9d18e" stroke="#6f7f58"/><use href="#cur" x="4" y="5"/></g>
<path d="M1560 290H1556V296H1560" fill="none" stroke="#000" stroke-width="1.300"/><path d="M1559 288.500L1564 293L1559 297.500Z" fill="#000"/>
<g fill="#ced6ec" stroke="#8a8a8a" stroke-width="1.500"><rect x="1723" y="283" width="26" height="22"/><rect x="1777" y="283" width="26" height="22"/></g>
<path d="M1736 283V305M1777 294H1803" stroke="#777" stroke-width="1.500"/>
<rect x="1835" y="284" width="17" height="17" fill="#fff" stroke="#000" stroke-width="1.800"/><path d="M1834 284.500H1853" stroke="#000" stroke-width="3"/>
<use href="#xx" transform="translate(1898 294) scale(1.100)"/>
<path d="M984 1022L995 1034M995 1022L984 1034" stroke="#9a9a9a" stroke-width="5"/>
</svg>
</body></html>
